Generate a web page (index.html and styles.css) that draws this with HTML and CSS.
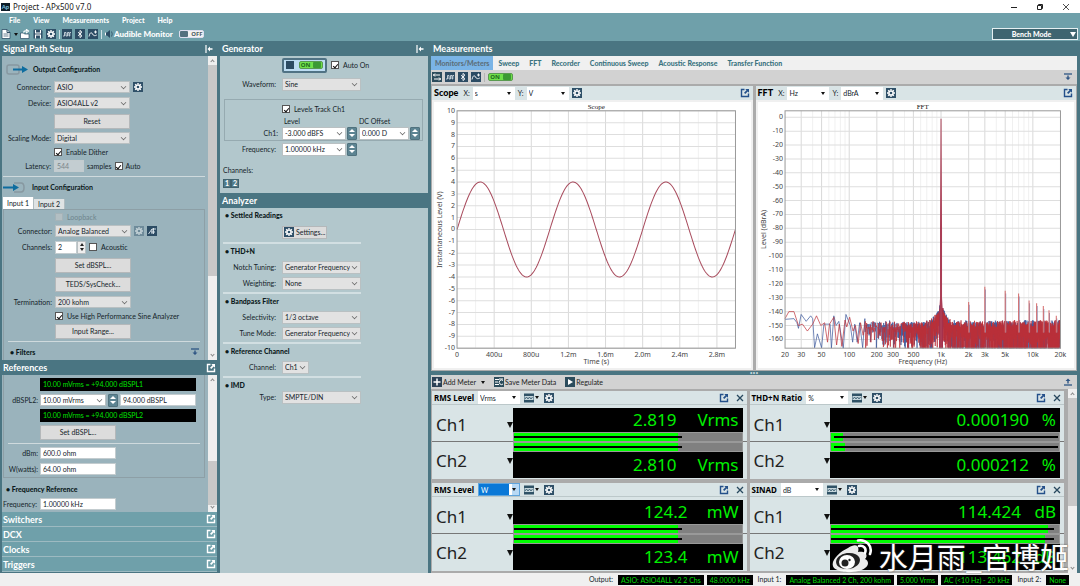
FILE: index.html
```html
<!DOCTYPE html>
<html lang="en">
<head>
<meta charset="utf-8">
<title>Project - APx500 v7.0</title>
<link rel="stylesheet" href="styles.css">
</head>
<body>
<svg class="defs" aria-hidden="true">
  <symbol id="gear" viewBox="0 0 10 10"><rect width="10" height="10" fill="#2f5068"/><circle cx="5" cy="5" r="2.1" fill="none" stroke="#fff" stroke-width="1.5"/><path d="M5 1v1.5M5 7.500V9M1 5h1.500M7.500 5H9M2.200 2.200l1 1M6.800 6.800l1 1M7.800 2.200l-1 1M3.200 6.800l-1 1" stroke="#fff" stroke-width="1.400"/></symbol>
  <symbol id="wave" viewBox="0 0 10 10"><rect width="10" height="10" fill="#2c4c64"/><path d="M1 7h1.500V3.500H4V7h1.500V3.500H7V7h.8V3.500H9" fill="none" stroke="#dfe9ef" stroke-width=".8"/></symbol>
  <symbol id="bt" viewBox="0 0 10 10"><rect width="10" height="10" fill="#2c4c64"/><path d="M3 3.200l4 3.600L5 8.600V1.400l2 1.800L3 6.800" fill="none" stroke="#fff" stroke-width=".9"/></symbol>
  <symbol id="sweep" viewBox="0 0 10 10"><rect width="10" height="10" fill="#2c4c64"/><path d="M1 7.500C2 3 3.500 3 4.500 5S7 7 8.800 6M6 3h3M7.500 1.500v3" fill="none" stroke="#fff" stroke-width=".9"/></symbol>
  <symbol id="save" viewBox="0 0 10 10"><path d="M.5.500h7.500L9.500 2v7.500h-9z" fill="#2c4c64"/><path d="M2.500 1v3h5V1M2.500 9.500V6h5v3.500" fill="none" stroke="#fff" stroke-width="1.100"/></symbol>
  <symbol id="doc" viewBox="0 0 10 10"><path d="M1 .5h5l3 3v6H1z" fill="#fff" stroke="#2c4c64" stroke-width=".8"/><path d="M6 .5v3h3" fill="none" stroke="#2c4c64"/><path d="M2.500 5h5M2.500 7h5" stroke="#2c4c64" stroke-width=".7"/></symbol>
  <symbol id="open" viewBox="0 0 10 10"><path d="M.5 9.500V4h3l1 1H9v4.500z" fill="#fff" stroke="#2c4c64" stroke-width=".7"/><path d="M3.500 3.500C4 1.500 5 1.500 7 2M6 .2L8.500 2 6 4" fill="none" stroke="#fff" stroke-width="1.200"/></symbol>
  <symbol id="speaker" viewBox="0 0 10 10"><path d="M1 3.500h2L6 1v8L3 6.500H1z" fill="#2c4c64"/><path d="M1 3.500h1v3H1z" fill="#fff"/><path d="M7.500 2.500q1.500 2.500 0 5" fill="none" stroke="#2c4c64" stroke-width=".8"/></symbol>
  <symbol id="pop" viewBox="0 0 10 10"><path d="M4.500 1.500h-3v7h7v-3" fill="none" stroke="currentColor" stroke-width="1.400"/><path d="M5.300 1H9v3.700L7.700 3.500 5.300 6 4 4.700l2.500-2.400z" fill="currentColor"/></symbol>
  <symbol id="dockin" viewBox="0 0 8 8"><path d="M1 0v8" stroke="#fff" stroke-width="1.200"/><path d="M2.500 4L5 1.500V3.300h2.500v1.400H5v1.800z" fill="#fff"/></symbol>
  <symbol id="pin" viewBox="0 0 10 8"><path d="M1 1h8" stroke="#2e5584" stroke-width="1.300"/><path d="M5 7L2.500 4.500H4.300V2.500h1.400v2h1.800z" fill="#2e5584"/></symbol>
  <symbol id="pinup" viewBox="0 0 10 8"><path d="M1 7h8" stroke="#2e5584" stroke-width="1.300"/><path d="M5 .5L7.500 3H5.700v2.500H4.300V3H2.500z" fill="#2e5584"/></symbol>
  <symbol id="close" viewBox="0 0 8 8"><path d="M1 1l6 6M7 1L1 7" stroke="#27485e" stroke-width="1.300"/></symbol>
  <symbol id="plus" viewBox="0 0 10 10"><rect width="10" height="10" fill="#2c4257"/><path d="M5 1.500v7M1.500 5h7" stroke="#fff" stroke-width="1.500"/></symbol>
  <symbol id="play" viewBox="0 0 10 10"><rect width="10" height="10" fill="#2c4c5c"/><path d="M3 2l5 3-5 3z" fill="#fff"/></symbol>
  <symbol id="data" viewBox="0 0 10 10"><rect width="10" height="10" fill="#2c4c5c"/><path d="M1 2.500h4M1 5h3M1 7.500h4" stroke="#fff" stroke-width="1.200"/><path d="M9 3.500a2.300 2.300 0 1 0 0 3.500M5 2h4" fill="none" stroke="#fff"/></symbol>
  <symbol id="inout" viewBox="0 0 10 10"><rect width="10" height="10" fill="#2c4c5c"/><path d="M1 3h7M3 1.500L1.500 3 3 4.500M2 7h7M7 5.500L8.500 7 7 8.500" fill="none" stroke="#fff"/></symbol>
  <symbol id="filter" viewBox="0 0 10 10"><rect width="10" height="10" fill="#2c4c64"/><path d="M1.500 8L5 3v5M4 6h4M6.500 2v6M5 3h4" fill="none" stroke="#dfe9ef" stroke-width=".9"/></symbol>
  <symbol id="meter" viewBox="0 0 10 10"><path d="M0 .5h10v9H0z" fill="#2f5266"/><path d="M.5 3h9v4h-9z" fill="#c5d6dc"/><path d="M1 6l1.500-2L4 6l1.500-2L7 6l1.500-2" fill="none" stroke="#2f5266" stroke-width=".8"/></symbol>
  <symbol id="arrowout" viewBox="0 0 22 12"><rect x="1" y="2" width="12" height="9" rx="2" fill="none" stroke="#8798a0" stroke-width="1.500"/><path d="M7 5.500h9V3l6 3.500-6 3.500V7.500H7z" fill="#0e6d9f"/></symbol>
  <symbol id="arrowin" viewBox="0 0 22 12"><path d="M11 2h7q3 0 3 4.500t-3 4.500h-7" fill="none" stroke="#8798a0" stroke-width="1.500"/><path d="M0 5.500h10V3l6 3.500-6 3.500V7.500H0z" fill="#0e6d9f"/></symbol>
</svg>

<header class="titlebar">
  <span class="logo">Ap</span><span class="apptitle">Project - APx500 v7.0</span>
  <span class="winbtns">
    <button aria-label="Minimize"><svg viewBox="0 0 8 8"><path d="M1 4.500h6" stroke="#222"/></svg></button>
    <button aria-label="Restore"><svg viewBox="0 0 8 8"><path d="M1.500 2.500h4v4h-4zM2.500 2.500v-1h4v4h-1" fill="none" stroke="#222"/></svg></button>
    <button aria-label="Close"><svg viewBox="0 0 8 8"><path d="M1 1l6 6M7 1L1 7" stroke="#222" stroke-width=".8"/></svg></button>
  </span>
</header>
<nav class="menubar"><button>File</button><button>View</button><button>Measurements</button><button>Project</button><button>Help</button></nav>
<div class="toolbar">
  <svg class="ico"><use href="#doc"/></svg><i class="tri"></i>
  <svg class="ico"><use href="#open"/></svg><svg class="ico"><use href="#save"/></svg><svg class="ico"><use href="#gear"/></svg><i class="bar"></i>
  <svg class="ico"><use href="#wave"/></svg><svg class="ico"><use href="#bt"/></svg><svg class="ico"><use href="#sweep"/></svg><i class="bar"></i>
  <svg class="ico spk"><use href="#speaker"/></svg><span class="audible">Audible Monitor</span>
  <button class="toggle off"><i></i>OFF</button>
  <button class="bench"><span>Bench Mode</span><i class="tri"></i></button>
</div>

<main class="work">
  <section class="left">
    <h2 class="head">Signal Path Setup<svg class="s8"><use href="#dockin"/></svg></h2>
    <div class="scrollwrap">
      <div class="pane">
        <h3 class="cfg"><svg class="arrow"><use href="#arrowout"/></svg>Output Configuration</h3>
        <div class="row"><label for="oc">Connector:</label><span class="sel w76"><select id="oc"><option>ASIO</option></select></span><svg class="ico"><use href="#gear"/></svg></div>
        <div class="row"><label for="od">Device:</label><span class="sel w76"><select id="od"><option>ASIO4ALL v2</option></select></span></div>
        <div class="row r20"><span></span><button class="btn">Reset</button></div>
        <div class="row r14"><label for="os">Scaling Mode:</label><span class="sel w76"><select id="os"><option>Digital</option></select></span></div>
        <div class="row r14"><span></span><label class="chk"><input type="checkbox" checked>Enable Dither</label></div>
        <div class="row r14"><label for="ol">Latency:</label><input class="txt w30 dis" id="ol" value="544" disabled><span>samples</span><label class="chk tight"><input type="checkbox" checked>Auto</label></div>
        <hr class="cut">
        <h3 class="cfg in"><svg class="arrow"><use href="#arrowin"/></svg>Input Configuration</h3>
        <div class="tabs"><button class="on">Input 1</button><button>Input 2</button></div>
        <div class="tabpane">
          <div class="row r14"><span></span><label class="chk dim"><input type="checkbox" disabled>Loopback</label></div>
          <div class="row r14"><label for="ic">Connector:</label><span class="sel w76"><select id="ic"><option>Analog Balanced</option></select></span><svg class="ico faded"><use href="#gear"/></svg><svg class="ico"><use href="#filter"/></svg></div>
          <div class="row r18"><label for="ich">Channels:</label><span class="spin"><input class="txt" id="ich" value="2"><span class="ud plain"><button aria-label="Up"></button><button aria-label="Down"></button></span></span><label class="chk"><input type="checkbox">Acoustic</label></div>
          <div class="row r18"><span></span><button class="btn">Set dBSPL...</button></div>
          <div class="row r20"><span></span><button class="btn">TEDS/SysCheck...</button></div>
          <div class="row"><label for="it">Termination:</label><span class="sel w76"><select id="it"><option>200 kohm</option></select></span></div>
          <div class="row r12"><span></span><label class="chk"><input type="checkbox" checked>Use High Performance Sine Analyzer</label></div>
          <div class="row r18"><span></span><button class="btn">Input Range...</button></div>
          <hr>
          <h4 class="filters"><span>• Filters</span><svg class="s10"><use href="#pin"/></svg></h4>
        </div>
      </div>
      <div class="scroll"><i class="up"></i><i class="thumb t1"></i><i class="dn"></i></div>
    </div>
    <h2 class="head">References<svg class="s10"><use href="#pop"/></svg></h2>
    <div class="scrollwrap refs">
      <div class="pane">
        <div class="refbox">
          <div class="lcd">10.00 mVrms = +94.000 dBSPL1</div>
          <div class="row r18"><label for="r2">dBSPL2:</label><span class="sel w66"><input class="txt" id="r2" value="10.00 mVrms"></span><span class="ud"><button aria-label="Up"></button><button aria-label="Down"></button></span><input class="txt w76" aria-label="dBSPL2 level" value="94.000 dBSPL"></div>
          <div class="lcd">10.00 mVrms = +94.000 dBSPL2</div>
          <div class="row r20"><span></span><button class="btn">Set dBSPL...</button></div>
          <hr>
          <div class="row"><label for="rd">dBm:</label><input class="txt w76" id="rd" value="600.0 ohm"></div>
          <div class="row"><label for="rw">W(watts):</label><input class="txt w76" id="rw" value="64.00 ohm"></div>
        </div>
        <h4>• Frequency Reference</h4>
        <div class="row freq"><label for="rf">Frequency:</label><input class="txt w76" id="rf" value="1.00000 kHz"></div>
      </div>
      <div class="scroll"><i class="up"></i><i class="thumb t2"></i><i class="dn"></i></div>
    </div>
    <h2 class="head light">Switchers<svg class="s10"><use href="#pop"/></svg></h2>
    <h2 class="head light">DCX<svg class="s10"><use href="#pop"/></svg></h2>
    <h2 class="head light">Clocks<svg class="s10"><use href="#pop"/></svg></h2>
    <h2 class="head light">Triggers<svg class="s10"><use href="#pop"/></svg></h2>
  </section>

  <section class="mid">
    <h2 class="head">Generator<svg class="s8"><use href="#dockin"/></svg></h2>
    <div class="gen">
      <div class="row r18"><span></span><span class="genon"><i></i><button class="toggle on">ON<i></i></button></span><label class="chk"><input type="checkbox" checked>Auto On</label></div>
      <div class="row r20"><label for="gw">Waveform:</label><span class="sel w79"><select id="gw"><option>Sine</option></select></span></div>
      <div class="group">
        <div class="row"><span></span><label class="chk"><input type="checkbox" checked>Levels Track Ch1</label></div>
        <div class="row lv"><span></span><span class="w76">Level</span><span>DC Offset</span></div>
        <div class="row r14"><label for="gl">Ch1:</label><span class="sel w64"><input class="txt" id="gl" value="-3.000 dBFS"></span><span class="ud"><button aria-label="Up"></button><button aria-label="Down"></button></span><span class="sel w50"><input class="txt" aria-label="DC Offset" value="0.000 D"></span><span class="ud"><button aria-label="Up"></button><button aria-label="Down"></button></span></div>
      </div>
      <div class="row"><label for="gf">Frequency:</label><span class="sel w64"><input class="txt" id="gf" value="1.00000 kHz"></span><span class="ud"><button aria-label="Up"></button><button aria-label="Down"></button></span></div>
      <p class="chl">Channels:</p>
      <div class="chips"><button>1</button><button>2</button></div>
    </div>
    <h2 class="head">Analyzer</h2>
    <div class="ana">
      <div class="sec"><h4>• Settled Readings</h4><div class="row r18"><span></span><button class="btn set"><svg class="ico"><use href="#gear"/></svg>Settings...</button></div></div>
      <div class="sec"><h4>• THD+N</h4>
        <div class="row"><label for="an">Notch Tuning:</label><span class="sel w79"><select id="an"><option>Generator Frequency</option></select></span></div>
        <div class="row"><label for="aw">Weighting:</label><span class="sel w79"><select id="aw"><option>None</option></select></span></div></div>
      <div class="sec"><h4>• Bandpass Filter</h4>
        <div class="row"><label for="as">Selectivity:</label><span class="sel w79"><select id="as"><option>1/3 octave</option></select></span></div>
        <div class="row"><label for="at">Tune Mode:</label><span class="sel w79"><select id="at"><option>Generator Frequency</option></select></span></div></div>
      <div class="sec"><h4>• Reference Channel</h4>
        <div class="row"><label for="ac">Channel:</label><span class="sel w27"><select id="ac"><option>Ch1</option></select></span></div></div>
      <div class="sec last"><h4>• IMD</h4>
        <div class="row r14"><label for="ai">Type:</label><span class="sel w79"><select id="ai"><option>SMPTE/DIN</option></select></span></div></div>
    </div>
  </section>

  <section class="right">
    <h2 class="head">Measurements</h2>
    <nav class="mtabs"><button class="on">Monitors/Meters</button><button>Sweep</button><button>FFT</button><button>Recorder</button><button>Continuous Sweep</button><button>Acoustic Response</button><button>Transfer Function</button></nav>
    <div class="mbar"><svg class="ico"><use href="#inout"/></svg><svg class="ico"><use href="#wave"/></svg><svg class="ico"><use href="#bt"/></svg><svg class="ico"><use href="#sweep"/></svg><i class="vr"></i><button class="toggle on">ON<i></i></button><svg class="s10 end"><use href="#pin"/></svg></div>
    <div class="charts">
      <article class="chart">
        <header><h3>Scope</h3><label for="sx">X:</label><span class="sel flat w42"><select id="sx"><option>s</option></select></span><label for="sy">Y:</label><span class="sel flat w42"><select id="sy"><option>V</option></select></span><svg class="ico"><use href="#gear"/></svg><svg class="s10 end blue"><use href="#pop"/></svg></header>
        <div class="canvas"><svg id="scope" viewBox="0 0 316 264" role="img" aria-label="Scope"></svg></div>
      </article>
      <article class="chart">
        <header><h3>FFT</h3><label for="fx">X:</label><span class="sel flat w42"><select id="fx"><option>Hz</option></select></span><label for="fy">Y:</label><span class="sel flat w42"><select id="fy"><option>dBrA</option></select></span><svg class="ico"><use href="#gear"/></svg><svg class="s10 end blue"><use href="#pop"/></svg></header>
        <div class="canvas"><svg id="fft" viewBox="0 0 316 264" role="img" aria-label="FFT"></svg></div>
      </article>
    </div>
    <div class="split">•••</div>
    <div class="mbar meterbar"><button><svg class="ico"><use href="#plus"/></svg>Add Meter<i class="tri"></i></button><button><svg class="ico"><use href="#data"/></svg>Save Meter Data</button><button><svg class="ico"><use href="#play"/></svg>Regulate</button><svg class="s10 end"><use href="#pinup"/></svg></div>
    <div class="meterwrap">
      <div class="meters">
        <article class="meter">
          <header><h3>RMS Level</h3><span class="sel flat w42"><select aria-label="Unit"><option>Vrms</option></select></span><svg class="ico"><use href="#meter"/></svg><i class="tri"></i><svg class="ico"><use href="#gear"/></svg><svg class="s10 end blue"><use href="#pop"/></svg><svg class="s8"><use href="#close"/></svg></header>
          <div class="ch"><span class="nm">Ch1<i class="tri"></i></span><div class="out"><p><b>2.819</b><b class="u4">Vrms</b></p><div class="lvl"><i style="width:72%"></i><s style="width:74%"></s></div></div></div>
          <div class="ch rev"><span class="nm">Ch2<i class="tri"></i></span><div class="out"><p><b>2.810</b><b class="u4">Vrms</b></p><div class="lvl"><i style="width:72%"></i><s style="width:74%"></s></div></div></div>
        </article>
        <article class="meter">
          <header><h3>THD+N Ratio</h3><span class="sel flat w42"><select aria-label="Unit"><option>%</option></select></span><svg class="ico"><use href="#meter"/></svg><i class="tri"></i><svg class="ico"><use href="#gear"/></svg><svg class="s10 end blue"><use href="#pop"/></svg><svg class="s8"><use href="#close"/></svg></header>
          <div class="ch"><span class="nm">Ch1<i class="tri"></i></span><div class="out"><p><b>0.000190</b><b class="u1">%</b></p><div class="lvl"><i style="width:5%"></i><s class="full"></s></div></div></div>
          <div class="ch rev"><span class="nm">Ch2<i class="tri"></i></span><div class="out"><p><b>0.000212</b><b class="u1">%</b></p><div class="lvl"><i style="width:6%"></i><s class="full"></s></div></div></div>
        </article>
        <article class="meter">
          <header><h3>RMS Level</h3><span class="sel flat w42 focus"><select aria-label="Unit"><option>W</option></select></span><svg class="ico"><use href="#meter"/></svg><i class="tri"></i><svg class="ico"><use href="#gear"/></svg><svg class="s10 end blue"><use href="#pop"/></svg><svg class="s8"><use href="#close"/></svg></header>
          <div class="ch"><span class="nm">Ch1<i class="tri"></i></span><div class="out"><p><b>124.2</b><b class="u3">mW</b></p><div class="lvl"><i style="width:72%"></i><s style="width:74%"></s></div></div></div>
          <div class="ch rev"><span class="nm">Ch2<i class="tri"></i></span><div class="out"><p><b>123.4</b><b class="u3">mW</b></p><div class="lvl"><i style="width:72%"></i><s style="width:74%"></s></div></div></div>
        </article>
        <article class="meter">
          <header><h3>SINAD</h3><span class="sel flat w42"><select aria-label="Unit"><option>dB</option></select></span><svg class="ico"><use href="#meter"/></svg><i class="tri"></i><svg class="ico"><use href="#gear"/></svg><svg class="s10 end blue"><use href="#pop"/></svg><svg class="s8"><use href="#close"/></svg></header>
          <div class="ch"><span class="nm">Ch1<i class="tri"></i></span><div class="out"><p><b>114.424</b><b class="u2">dB</b></p><div class="lvl"><i style="width:95%"></i><s style="width:98%"></s></div></div></div>
          <div class="ch rev"><span class="nm">Ch2<i class="tri"></i></span><div class="out"><p><b>113.462</b><b class="u2">dB</b></p><div class="lvl"><i style="width:94%"></i><s style="width:98%"></s></div></div></div>
        </article>
      </div>
      <div class="scroll"><i class="up"></i><i class="thumb t3"></i><i class="dn"></i></div>
    </div>
  </section>
</main>
<footer class="status"><span>Output:</span><b>ASIO: ASIO4ALL v2 2 Chs</b><b>48.0000 kHz</b><span>Input 1:</span><b>Analog Balanced 2 Ch, 200 kohm</b><b>5.000 Vrms</b><b>AC (&lt;10 Hz) - 20 kHz</b><span>Input 2:</span><b>None</b></footer>
<div class="mark">
  <svg viewBox="0 0 42 34"><path d="M17 9C24 4 29 6 27 13c9-1 10 4 7 7 4 2 4 6 0 9-6 5-24 6-31 0C-2 23 8 13 17 9z" fill="#fff" fill-opacity=".92"/><ellipse cx="17" cy="22" rx="12" ry="8" fill="#222" transform="rotate(-8 17 22)"/><ellipse cx="16" cy="23" rx="8" ry="7" fill="#fff"/><circle cx="14" cy="24" r="3.500" fill="#222"/><circle cx="18.500" cy="21" r="1.200" fill="#222"/><path d="M27 1.500C35 0 42 7 39 15M28 7c4-1 8 2 6 7" fill="none" stroke="#fff" stroke-width="2.600" stroke-linecap="round"/></svg>
  <span>水月雨_官博姬</span>
</div>
<script src="charts.js"></script>
</body>
</html>
```

FILE: styles.css
```css
:root{--ui:"Lato","Open Sans",sans-serif;--wide:"Noto Sans","Open Sans",sans-serif;--teal:#4a7582;--light:#6fa0aa;--navy:#2c4c64}
*{box-sizing:border-box}
body{margin:0;min-height:100vh;display:flex;flex-direction:column;position:relative;font:7px/9px var(--ui);color:#15242a;background:var(--teal);overflow:hidden}
h2,h3,h4,p{margin:0}
button,input,select{font:inherit;color:inherit;margin:0;padding:0;border:0;border-radius:0;background:none;min-width:0}
svg{display:block;flex:none}
.defs{position:absolute;width:0;height:0}
.ico,.s10{width:10px;height:10px}
.s8{width:8px;height:8px}
.end{margin-left:auto}
.faded{opacity:.4}
.blue{color:#24508a}
.tri{width:0;height:0;border:2px solid transparent;border-top:3px solid #111;border-bottom:0;flex:none}

.titlebar{height:13px;background:#fff;display:flex;align-items:center;padding:0 10px 0 1px;gap:3px}
.logo{width:9px;height:8px;background:#0c1c28;color:#7cc3e4;font:bold 6px/8px var(--ui);text-align:center}
.apptitle{font:8px/12px var(--wide);color:#222}
.winbtns{margin-left:auto;display:flex;gap:18px}
.winbtns svg{width:8px;height:8px}
.menubar{height:14px;background:var(--light);display:flex;align-items:center;gap:13px;padding-left:9px;font-weight:900;color:#fff}
.toolbar{height:14px;background:var(--light);display:flex;align-items:center;gap:2px;padding:0 2px 0 1px}
.toolbar .ico{margin-right:1px}
.toolbar .spk{margin:0 -2px 0 0}
.toolbar .toggle{margin-left:4px}
.bar{width:1px;height:9px;background:#cfe0e4}
.audible{font:900 8px/10px var(--ui);color:#fff}
.toggle{display:flex;align-items:center;justify-content:center;gap:3px;width:25px;height:8px;border-radius:2px;font:bold 6px/8px var(--wide)}
.toggle i{width:8px;height:6px;border-radius:1px}
.toggle.off{background:#f2f2f2;color:#4a5a62;border:1px solid #dde;}
.toggle.off i{background:#53707e}
.toggle.on{background:#6fe04a;color:#1c6a1c;border:1px solid #5a9a50}
.toggle.on i{background:#3c9a34}
.toolbar .bench{margin-left:auto;width:86px;height:12px;border:1px solid #e6f0f2;background:#3f6570;color:#fff;font-weight:900;display:flex;align-items:center;padding-right:1px}
.bench span{flex:1}
.bench .tri{border-top-color:#fff;border-width:5px 3px 0}

.work{flex:1;display:grid;grid-template-columns:215px 208px minmax(0,1fr);column-gap:3px;padding:0 3px 0 2px;background:var(--teal)}
.work>section{display:flex;flex-direction:column;min-width:0}
.head{height:15px;flex:none;display:flex;align-items:center;justify-content:space-between;padding:0 4px 0 2px;font:bold 9px/13px var(--ui);color:#fff;background:var(--teal)}
.left .head{padding-left:1px}
.head .s10{margin-right:-3px}
.light{background:var(--light);border-bottom:1px solid #9dbac1}
.scrollwrap{display:flex;background:#9ab3bc}
.pane{flex:1;min-width:0}
.scroll{width:9px;background:#efefef;display:flex;flex-direction:column;align-items:center;flex:none}
.scroll .thumb{width:9px;background:#c8c8c8}
.scroll .up,.scroll .dn{width:3px;height:3px;border:solid #888;border-width:1px 0 0 1px;transform:rotate(45deg);margin:4px 0 2px}
.scroll .dn{border-width:0 1px 1px 0;margin:auto 0 4px}
.t1{height:211px}
.t2{height:44px;margin-top:77px}
.t3{height:108px}
.cfg{display:flex;align-items:center;gap:5px;height:16px;margin:5px 0 2px 4px;font-size:7px;color:#0c1a20}
.cfg.in{margin:2px 0 2px 1px;gap:7px}
.arrow{width:22px;height:12px}
.row{display:flex;align-items:center;gap:3px;min-height:16px;white-space:nowrap}
.row>:first-child{width:49px;text-align:right;flex:none}
.r12{min-height:12px}.r14{min-height:14px}.r18{min-height:18px}.r20{min-height:20px}
.w27{width:27px}.w30{width:30px}.w42{width:42px}.w50{width:50px}.w64{width:64px}.w66{width:66px}.w76{width:76px}.w79{width:79px}
.sel{position:relative;display:flex;flex:none}
.sel select,.sel input{appearance:none;width:100%;height:12px;border:1px solid #b9c0c2;background:#e2e2e2;padding:0 10px 0 2px;line-height:10px;text-overflow:clip}
.sel input.txt{background:#fff}
.sel::after{content:"";position:absolute;right:4px;top:3px;width:4px;height:4px;border:solid #666;border-width:0 1px 1px 0;transform:rotate(45deg) scale(.8);pointer-events:none}
.txt{height:12px;background:#fff;border:1px solid #c3cccf;padding:0 2px}
.dis{background:#c3cdd1;color:#7b868a}
.btn{width:76px;height:15px;background:#dcdcdc;border:1px solid #b4b8ba;text-align:center}
.chk{display:flex;align-items:center;gap:4px}
.chk.tight{gap:3px}
.chk input{appearance:none;width:8px;height:8px;background:#fff;border:1px solid #555;display:grid;place-items:center}
.chk input:checked::after{content:"";width:2px;height:4px;border:solid #111;border-width:0 1px 1px 0;transform:rotate(40deg)}
.dim{color:#6f858d}
.dim input{background:#b3bfc3;border-color:#a5b3b8}
hr{border:0;height:1px;background:#cfdadd;margin:1px 4px;width:auto}
hr.cut{margin:3px 3px 0 1px}
.tabs{display:flex;align-items:flex-end;height:12px;padding-left:1px}
.tabs button{height:10px;padding:0 4px;background:#dfe3e4;border-right:1px solid #b0bcc0}
.tabs .on{height:12px;background:#fff}
.tabpane{border:1px solid #8d9fa6;border-bottom:0;margin:0 3px 0 1px}
.tabpane .row>:first-child{width:48px}
.tabpane hr{margin:1px 4px 2px}
.filters{display:flex;align-items:center;justify-content:space-between;height:16px;padding:0 4px 0 6px}
.spin{display:flex}
.spin .txt{width:22px;height:13px}
.ud{display:flex;flex-direction:column;width:10px;height:13px;background:#5c8492;border:1px solid #50727e;border-radius:1px;justify-content:space-evenly;align-items:center}
.ud button{width:0;height:0;border:3px solid transparent;border-bottom:3px solid #fff;border-top:0}
.ud button+button{border-top:3px solid #fff;border-bottom:0}
.ud.plain{background:#eee;border-color:#b9c0c2;width:9px}
.ud.plain button{border-width:0 2px 3px;border-bottom-color:#222}
.ud.plain button+button{border-width:3px 2px 0;border-top-color:#222}
h4{font-size:7px;line-height:9px;font-weight:900;color:#0c1a20}
.refs{height:137px}
.refbox{border:1px solid #8d9fa6;border-top:0;margin:0 3px 0 1px;padding-top:3px}
.refbox .row{gap:2px}
.refbox .row>:first-child{width:34px}
.lcd{background:#000;color:#00e000;height:13px;line-height:13px;margin:0 8px 0 36px;padding-left:3px}
.refs h4{padding:7px 0 3px 4px}
.freq{min-height:14px}
.freq>:first-child{width:35px}

.gen{background:#b2c7cc;padding:0 3px;height:137px}
.gen .row>:first-child,.ana .row>:first-child{width:53px}
.gen>.row{gap:1px}
.gen>.row>:first-child{margin-right:5px}
.gen>.row .chk{margin-left:3px}
.ana .row{gap:6px}
.gen .sel select,.gen .sel input,.ana .sel select{height:13px}
.genon{display:flex;align-items:center;gap:5px;width:45px;height:15px;border:2px solid #507284;border-radius:2px;background:#bcdcf2;padding:0 2px}
.genon>i{width:8px;height:8px;background:var(--navy);flex:none}
.group{border:1px solid #96aab0;height:42px;margin:5px 2px 0 1px;padding-top:1px}
.group .row>:first-child{width:53px}
.group .row{gap:1px}
.group .row>:nth-child(2){margin-left:3px}
.group .row>:nth-child(4){margin-left:1px}
.lv.row{min-height:8px}
.group .lv>:nth-child(2){padding-left:2px}
.chl{padding-top:9px}
.chips{display:flex;padding-top:4px}
.chips button{width:8px;height:9px;background:#517b8a;color:#fff;font-weight:bold;font-size:7px;line-height:7px;border:1px solid #41626e}
.ana{flex:1;background:#b2c7cc;padding:1px 3px 0}
.sec{width:138px;border-bottom:2px solid #d2dfe2;margin-bottom:1px;padding:1px 0}
.sec h4{padding:1px 0 3px 2px}
.sec.last{border:0}
.sec.last h4{padding-bottom:0}
.btn.set{width:45px;height:13px;display:flex;align-items:center;gap:2px;padding-left:1px}

.mtabs{background:#f0f0f0;height:14px;display:flex;color:#39737f;font-weight:900}
.mtabs button{padding:0 5px}
.mtabs .on{background:#7ab4e6;color:#5c6f7a;padding:0 4px}
.mbar{background:#d2d2d2;height:14px;display:flex;align-items:center;gap:3px;padding:0 4px 0 1px}
.vr{width:1px;height:9px;background:#b5b5b5}
.charts{flex:1;min-height:0;display:grid;grid-template-columns:1fr 1fr;grid-template-rows:minmax(0,1fr);gap:3px;background:#ababab;padding:2px 1px 1px}
.chart{display:flex;flex-direction:column;background:#f0f0f0;min-width:0;min-height:0}
.chart header,.meter header{background:#d9e4e6;display:flex;align-items:center;height:14px;gap:4px;padding:0 3px 0 2px;flex:none}
.chart header{gap:3px}
.chart h3{font:900 9px/12px var(--ui);color:#000;margin-right:2px}
.canvas{flex:1 1 0;display:flex;margin:2px;background:#fff;min-height:0}
.canvas svg{width:100%;height:100%}
.canvas text{font:7px var(--wide);fill:#444}
.canvas .ttl{font:7px "Liberation Serif",serif;fill:#111}
.sel.flat select{border:0;background:#fff;height:13px}
.sel.flat::after{width:0;height:0;border:2px solid transparent;border-top:3px solid #111;border-bottom:0;transform:none;top:5px}
.sel.flat.focus select{background:linear-gradient(90deg,#0a78d7 30px,#fff 30px,#fff 33px,#b8d9f5 33px);color:#fff;border:1px solid #5fa4dc}
.split{height:4px;background:var(--teal);color:#c3d6db;font-size:5px;line-height:4px;text-align:center}
.meterbar{gap:9px}
.meterbar button{display:flex;align-items:center;gap:1px;font-size:7px;color:#222}
.meterbar .tri{margin-left:4px}
.meterwrap{display:flex;background:#ababab}
.meters{flex:1;display:grid;grid-template-columns:1fr 1fr;gap:4px 3px;padding:2px 4px 2px 1px}
.meter{background:#d9e4e6;height:88px;padding-bottom:1px}
.meter header{border-bottom:1px solid #bcc8ca}
.meter h3{font:bold 8px/12px var(--wide);color:#000}
.meter header .tri{margin:0 1px 0 -3px}
.meter header .end{margin-right:3px}
.ch{display:flex;height:36px}
.ch:nth-child(2){height:37px;padding-top:3px;border-bottom:1px solid #777}
.nm{flex:1;display:flex;align-items:center;justify-content:space-between;font:17px/30px var(--wide);color:#222;padding-left:4px}
.rev .nm{padding-top:2px}
.nm .tri{border-width:6px 3px 0}
.out{width:73%;margin-right:4px;display:flex;flex-direction:column;background:#000}
.rev .out{flex-direction:column-reverse}
.out p{flex:1;display:flex;justify-content:flex-end;font:17px/24px var(--wide);color:#00f000;padding-right:4px}
.rev .out p{padding-top:1px}
.out b{font-weight:normal;text-align:right}
.u4{width:62px}.u3{width:51px}.u2{width:35px}.u1{width:27px}
.lvl{height:10px;flex:none;background:#808080;border:1px solid #999;display:grid;align-items:center}
.lvl>*{grid-area:1/1}
.lvl i{height:8px;background:#0f0}
.lvl s{height:2px;background:#000}
.lvl .full{margin:0 1px 0 3px}
.status{height:13px;background:#f0f0f0;display:flex;justify-content:flex-end;align-items:center;gap:3px;padding-right:11px;white-space:nowrap}
.status b{font-weight:normal;background:#000;color:#00d800;line-height:10px;padding:0 3px}
.status span{padding:0 2px}
.mark{position:absolute;right:11px;bottom:12px;display:flex;align-items:center;gap:6px;color:#fff;font:29px/32px "Noto Sans CJK SC",sans-serif;text-shadow:0 0 2px #444}
.mark svg{width:42px;height:36px}
```

FILE: charts.js
```js
const NS = 'http://www.w3.org/2000/svg';

function add(parent, name, attrs, text) {
  const el = document.createElementNS(NS, name);
  for (const key in attrs) el.setAttribute(key, attrs[key]);
  if (text !== undefined) el.textContent = text;
  parent.appendChild(el);
  return el;
}

function line(svg, x1, y1, x2, y2, stroke) {
  add(svg, 'line', { x1, y1, x2, y2, stroke, 'stroke-width': 1 });
}

function label(svg, x, y, text, anchor) {
  add(svg, 'text', { x, y, 'text-anchor': anchor }, text);
}

function frame(svg, box, title, xTitle, yTitle) {
  const midX = (box.l + box.r) / 2;
  const midY = (box.t + box.b) / 2;
  add(svg, 'rect', { x: box.l, y: box.t, width: box.r - box.l, height: box.b - box.t, fill: 'none', stroke: '#999' });
  add(svg, 'text', { x: midX, y: 6, 'text-anchor': 'middle', class: 'ttl' }, title);
  label(svg, midX, 261, xTitle, 'middle');
  add(svg, 'text', { x: 0, y: 0, 'text-anchor': 'middle', transform: `translate(8 ${midY}) rotate(-90)` }, yTitle);
}

function drawScope() {
  const svg = document.getElementById('scope');
  const box = { l: 23, r: 301, t: 8, b: 245 };
  const w = box.r - box.l, h = box.b - box.t;
  for (let i = 1; i < 15; i++) {
    const x = box.l + w * i / 15;
    line(svg, x, box.t, x, box.b, i % 2 ? '#f1f1f1' : '#d9d9d9');
  }
  for (let v = -10; v <= 10; v++) {
    const y = box.t + h * (10 - v) / 20;
    line(svg, box.l, y, box.r, y, '#dedede');
    label(svg, box.l - 2, y + 2, v, 'end');
  }
  ['0', '400u', '800u', '1.2m', '1.6m', '2.0m', '2.4m', '2.8m'].forEach((t, i) =>
    label(svg, box.l + w * i * 2 / 15, 254, t, 'middle'));
  let d = '';
  for (let x = 0; x <= w; x++) {
    const y = box.t + h / 2 - h / 5 * Math.sin(2 * Math.PI * 3 * x / w);
    d += (x ? 'L' : 'M') + (box.l + x) + ' ' + y.toFixed(2);
  }
  add(svg, 'path', { d, fill: 'none', stroke: '#a84a5c', 'stroke-width': 1 });
  frame(svg, box, 'Scope', 'Time (s)', 'Instantaneous Level (V)');
}

function drawFft() {
  const svg = document.getElementById('fft');
  const box = { l: 27, r: 302, t: 8, b: 245 };
  const px = f => box.l + (box.r - box.l) * Math.log10(f / 20) / 3;
  const py = db => 14.5 - db * 1.386;
  for (const decade of [10, 100, 1000, 10000]) {
    for (let k = 1; k < 10; k++) {
      const f = decade * k;
      if (f > 20 && f < 20000) line(svg, px(f), box.t, px(f), box.b, [1, 2, 3, 5].includes(k) ? '#d9d9d9' : '#f0f0f0');
    }
  }
  for (let db = 0; db >= -160; db -= 10) {
    line(svg, box.l, py(db), box.r, py(db), '#dedede');
    label(svg, box.l - 2, py(db) + 2, db, 'end');
  }
  [[20, '20'], [30, '30'], [50, '50'], [100, '100'], [200, '200'], [300, '300'], [500, '500'], [1000, '1k'],
    [2000, '2k'], [3000, '3k'], [5000, '5k'], [10000, '10k'], [20000, '20k']].forEach(([f, t]) =>
    label(svg, px(f), 254, t, 'middle'));

  let seed = 7;
  const rnd = () => (seed = (seed * 16807) % 2147483647) / 2147483647;
  const clampY = y => Math.min(box.b, y).toFixed(1);
  function trace(start, color) {
    const pts = start.map(([f, db]) => [px(f), py(db)]);
    let x = px(start[start.length - 1][0]);
    while (x < box.r) {
      const t = (x - box.l) / (box.r - box.l);
      const near = Math.max(0, 1 - Math.abs(x - px(1000)) / 14);
      const top = -151 + near * near * 14 + rnd() * 5;
      const depth = 7 + 20 * t;
      const low = rnd() < 0.2 + t ? top - depth * (0.4 + rnd()) : top - depth * rnd();
      pts.push([x, py(top - (1 - t) * rnd() * 4)], [x + 0.3, py(low)]);
      x += Math.max(0.5, 2.6 - t * 4.4);
    }
    const d = pts.map(([a, b], i) => (i ? 'L' : 'M') + Math.min(a, box.r).toFixed(1) + ' ' + clampY(b)).join('');
    add(svg, 'path', { d, fill: 'none', stroke: color, 'stroke-width': 0.7 });
  }
  trace([[20, -145.5], [25, -145], [27, -148], [28, -152], [30, -142], [34, -147], [38, -143], [40, -145], [42, -166],
    [45, -156], [50, -166], [53, -149], [62, -149], [64, -167], [68, -143], [72, -150], [77, -147], [86, -167], [92, -142],
    [103, -150], [109, -162], [115, -149], [122, -162], [130, -148], [140, -166], [148, -145]], '#38559a');
  trace([[20, -145], [22, -140], [25, -140], [28, -150], [31, -149], [35, -154], [40, -149], [44, -143], [49, -150],
    [54, -148], [58, -162], [61, -149], [68, -144], [73, -164], [78, -149], [83, -165], [90, -146], [94, -151], [101, -144],
    [110, -154], [117, -150], [125, -163], [133, -148], [142, -157], [150, -147]], '#bc2f38');
  const harmonics = [[2000, -133], [3000, -122], [5000, -125], [7000, -127], [9100, -132], [11000, -134], [13000, -136], [15000, -139], [18000, -143]];
  harmonics.forEach(([f, db]) => {
    line(svg, px(f) + 0.5, py(db - 2), px(f) + 0.5, py(-155), '#8a93bb');
    line(svg, px(f), py(db), px(f), py(-155), '#d56a6a');
  });
  add(svg, 'path', { d: `M${px(1000) - 2} ${box.b}V${py(-143)}L${px(1000) - 1} ${py(-130)}V${py(-80)}L${px(1000)} ${py(-1)}L${px(1000) + 1} ${py(-80)}V${py(-130)}L${px(1000) + 2} ${py(-143)}V${box.b}z`, fill: '#a5304c' });
  line(svg, px(1000), py(-1), px(1000), box.b, '#b04a5e');
  frame(svg, box, 'FFT', 'Frequency (Hz)', 'Level (dBrA)');
}

drawScope();
drawFft();
```
